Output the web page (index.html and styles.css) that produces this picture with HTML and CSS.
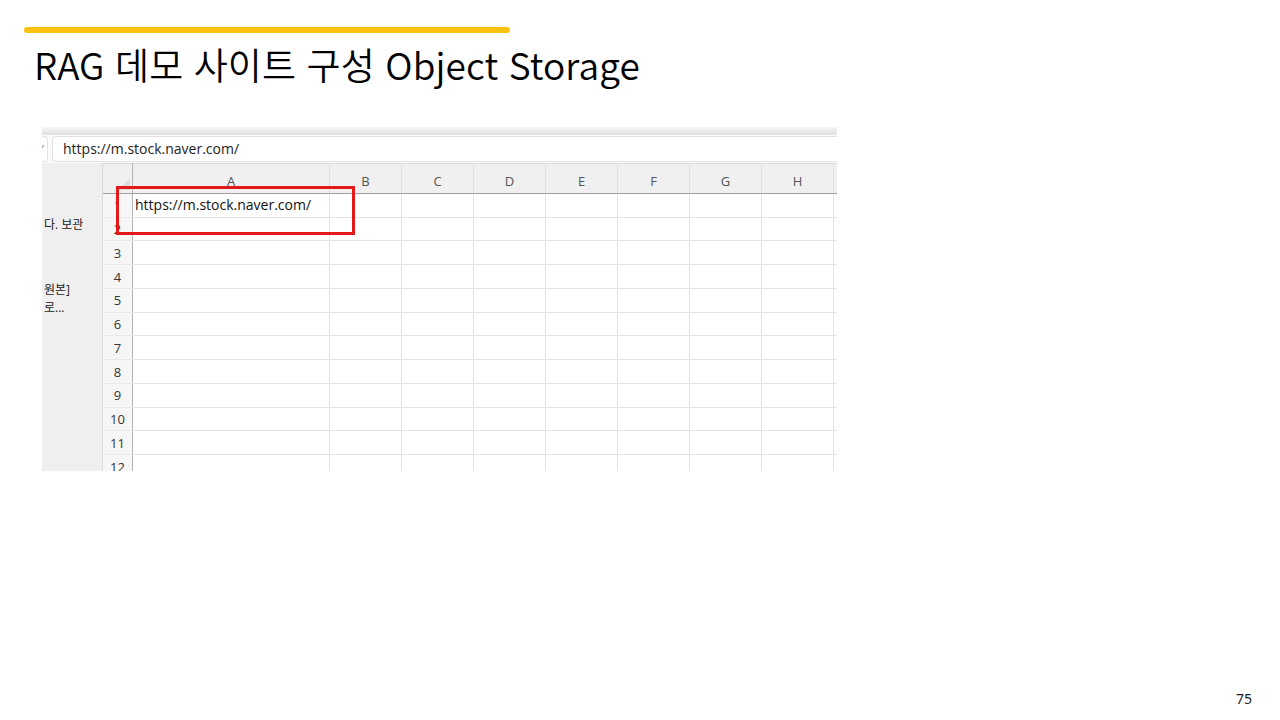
FILE: index.html
```html
<!DOCTYPE html>
<html lang="ko">
<head>
<meta charset="utf-8"/>
<meta content="width=device-width, initial-scale=1.0" name="viewport"/>
<title>RAG 데모 사이트 구성 Object Storage</title>
<link rel="stylesheet" href="styles.css">
</head>
<body>
<div class="slide">
  <div class="accent-bar"></div>
  <h1 class="title">RAG 데모 사이트 구성 Object Storage</h1>

  <div class="shot">
    <div class="ribbon-edge"></div>
    <div class="formula-row">
      <div class="name-stub">✓</div>
      <div class="formula-input">https://m.stock.naver.com/</div>
    </div>
    <div class="sheet-area">
      <div class="side-pane">
        <p class="side-item first">다. 보관</p>
        <p class="side-item second">원본]</p>
        <p class="side-item">로...</p>
      </div>
      <table class="grid">
        <thead>
          <tr>
            <th class="corner"></th>
            <th class="col-a">A</th><th>B</th><th>C</th><th>D</th><th>E</th><th>F</th><th>G</th><th>H</th><th class="rest"></th>
          </tr>
        </thead>
        <tbody>
          <tr><th>1</th><td class="url">https://m.stock.naver.com/</td><td></td><td></td><td></td><td></td><td></td><td></td><td></td><td></td></tr>
          <tr><th>2</th><td></td><td></td><td></td><td></td><td></td><td></td><td></td><td></td><td></td></tr>
          <tr><th>3</th><td></td><td></td><td></td><td></td><td></td><td></td><td></td><td></td><td></td></tr>
          <tr><th>4</th><td></td><td></td><td></td><td></td><td></td><td></td><td></td><td></td><td></td></tr>
          <tr><th>5</th><td></td><td></td><td></td><td></td><td></td><td></td><td></td><td></td><td></td></tr>
          <tr><th>6</th><td></td><td></td><td></td><td></td><td></td><td></td><td></td><td></td><td></td></tr>
          <tr><th>7</th><td></td><td></td><td></td><td></td><td></td><td></td><td></td><td></td><td></td></tr>
          <tr><th>8</th><td></td><td></td><td></td><td></td><td></td><td></td><td></td><td></td><td></td></tr>
          <tr><th>9</th><td></td><td></td><td></td><td></td><td></td><td></td><td></td><td></td><td></td></tr>
          <tr><th>10</th><td></td><td></td><td></td><td></td><td></td><td></td><td></td><td></td><td></td></tr>
          <tr><th>11</th><td></td><td></td><td></td><td></td><td></td><td></td><td></td><td></td><td></td></tr>
          <tr><th class="last">12</th><td></td><td></td><td></td><td></td><td></td><td></td><td></td><td></td><td></td></tr>
        </tbody>
      </table>
    </div>
    <div class="highlight"></div>
  </div>

  <div class="page-num">75</div>
</div>
</body>
</html>
```

FILE: styles.css
```css
body {
  margin: 0;
  background: #fff;
  color: #000;
  font-family: 'Noto Sans', 'Noto Sans CJK KR', sans-serif;
}
.slide {
  width: 1280px;
  height: 720px;
  overflow: hidden;
  display: flex;
  flex-direction: column;
}
.accent-bar {
  margin: 27px 0 0 24px;
  width: 486px;
  height: 6px;
  border-radius: 3px;
  background: #fbc211;
}
.title {
  margin: 7px 0 0 34px;
  font-family: 'Noto Sans CJK KR', sans-serif;
  font-weight: 350;
  font-size: 37px;
  line-height: 48px;
  letter-spacing: 0.1px;
}

/* screenshot of the spreadsheet */
.shot {
  position: relative;
  margin: 39px 0 0 42px;
  width: 795px;
  height: 344px;
  overflow: hidden;
  background: #fff;
  font-family: 'Open Sans', 'Noto Sans CJK KR', sans-serif;
}
.ribbon-edge {
  height: 7px;
  background: linear-gradient(#f6f6f6, #e2e2e2);
  border-bottom: 1px solid #e4e4e4;
}
.formula-row {
  height: 28px;
  display: flex;
  align-items: center;
  gap: 4px;
  background: #fbfbfb;
}
.name-stub {
  width: 6px;
  height: 24px;
  margin-left: -1px;
  border: 1px solid #e2e2e2;
  border-left: none;
  border-radius: 0 4px 4px 0;
  background: #fff;
  font-size: 9px;
  line-height: 24px;
  color: #666;
  overflow: hidden;
  text-indent: -3px;
}
.formula-input {
  flex: 1;
  height: 24px;
  padding-left: 10px;
  border: 1px solid #e2e2e2;
  border-right: none;
  border-radius: 4px 0 0 4px;
  background: #fff;
  font-size: 14px;
  line-height: 24px;
  color: #222;
}
.sheet-area {
  display: flex;
}
.side-pane {
  width: 60px;
  flex-shrink: 0;
  height: 320px;
  background: #efefef;
  border-right: 1px solid #dcdcdc;
  font-size: 12px;
  color: #222;
  overflow: hidden;
}
.side-item {
  margin: 0;
  padding-left: 2px;
  line-height: 18px;
  white-space: nowrap;
}
.side-item.first {
  margin-top: 53px;
}
.side-item.second {
  margin-top: 47px;
}
.grid {
  border-collapse: collapse;
  table-layout: fixed;
  width: 734px;
}
.grid th,
.grid td {
  padding: 0;
  height: 22.5px;
  line-height: 16px;
  border: 1px solid #e3e3e3;
  border-top: none;
  border-left: none;
}
.grid thead th {
  height: 25px;
  width: 71px;
  background: #f0f0f0;
  border-top: 1px solid #dadada;
  border-bottom: 1px solid #a0a0a0;
  border-right: 1px solid #e0e0e0;
  font-weight: 400;
  font-size: 13px;
  color: #555;
  vertical-align: middle;
  padding-top: 4px;
}
.grid thead .corner {
  width: 29px;
  position: relative;
  background: #f0f0f0;
  border-right: 1px solid #b5b5b5;
}
.grid thead .corner::after {
  content: "";
  position: absolute;
  right: 2px;
  bottom: 3px;
  border-left: 12px solid transparent;
  border-bottom: 12px solid #dcdcdc;
}
.grid thead .col-a {
  width: 196px;
}
.grid thead .rest {
  width: 5px;
  border-right: none;
}
.grid tbody th {
  background: #f6f6f6;
  border-right: 1px solid #b5b5b5;
  border-bottom: 1px solid #e9e9e9;
  font-weight: 400;
  font-size: 13px;
  color: #333;
  text-align: center;
}
.grid tbody th.last {
  vertical-align: top;
  padding-top: 4px;
}
.grid td.url {
  font-size: 14px;
  color: #111;
  padding-left: 2px;
  white-space: nowrap;
}
.highlight {
  position: absolute;
  left: 74px;
  top: 59px;
  width: 233px;
  height: 43px;
  border: 3px solid #e31a1a;
}
.page-num {
  margin: auto 0 0 1236px;
  padding-bottom: 12px;
  font-size: 14px;
  color: #222;
}
```
